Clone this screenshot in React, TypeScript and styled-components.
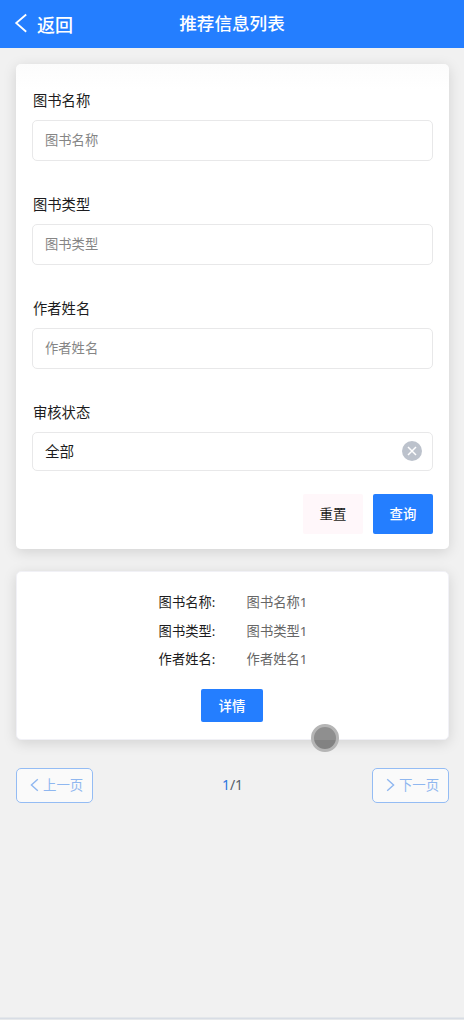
import React from "react";
import styled, { createGlobalStyle } from "styled-components";

const Global = createGlobalStyle`
  * { box-sizing: border-box; }
  body {
    margin: 0;
    background: #f1f1f1;
    color: #1c1c20;
    font-family: "Noto Sans", "Noto Sans CJK SC", sans-serif;
  }
  button, input { font-family: inherit; }
`;

const Page = styled.div`
  height: 1020px;
  display: flex;
  flex-direction: column;
  overflow: hidden;
`;

const Header = styled.header`
  height: 48px;
  flex: none;
  display: grid;
  grid-template-columns: 1fr auto 1fr;
  align-items: center;
  padding: 0 14px;
  background: #247eff;
  color: #fff;
`;

const Back = styled.a`
  display: flex;
  align-items: center;
  gap: 9px;
  font-size: 18px;
  font-weight: 500;
  line-height: 24px;
  svg { display: block; margin-top: -2px; }
  span { margin-top: 1px; }
`;

const Title = styled.h1`
  margin: 0;
  font-size: 17.6px;
  font-weight: 500;
  line-height: 24px;
  padding-bottom: 2px;
`;

const Content = styled.main`
  flex: 1;
  padding: 16px 15px 0 16px;
`;

const Card = styled.section`
  background: #fff;
  border-radius: 5px;
  box-shadow: 0 3px 14px rgba(0, 0, 0, 0.13);
`;

const SearchCard = styled(Card)`
  height: 485px;
  padding: 26px 16px 0;
  background: linear-gradient(#fcfcfc, #fff 26px);
`;

const Field = styled.div<{ $last?: boolean }>`
  height: ${(p) => (p.$last ? 92 : 104)}px;
`;

const Label = styled.label`
  display: block;
  height: 30px;
  font-size: 14.3px;
  line-height: 20px;
  padding: 1px 0 0 1px;
`;

const Control = styled.div<{ $height?: number }>`
  display: flex;
  align-items: center;
  justify-content: space-between;
  height: ${(p) => p.$height ?? 41}px;
  padding: 0 10px 2px 12px;
  border: 1px solid #e8e8e9;
  border-radius: 5px;
  background: #fff;
  font-size: 14.6px;
  line-height: 20px;
`;

const Input = styled.input`
  width: 100%;
  padding: 0;
  border: 0;
  outline: 0;
  background: transparent;
  font-size: 13.3px;
  line-height: 20px;
  &::placeholder { color: #858585; opacity: 1; }
`;

const Actions = styled.div`
  display: flex;
  justify-content: flex-end;
  gap: 10px;
`;

const Button = styled.button<{ $plain?: boolean }>`
  width: 60px;
  height: 40px;
  padding: 0 0 2px;
  border: 0;
  border-radius: 2px;
  background: ${(p) => (p.$plain ? "#fff7fa" : "#247eff")};
  color: ${(p) => (p.$plain ? "#1c1c20" : "#fff")};
  font-size: 13.4px;
  font-weight: ${(p) => (p.$plain ? 400 : 500)};
`;

const DetailButton = styled(Button)`
  width: 62px;
  height: 33px;
  margin-top: 16px;
  margin-right: 1px;
`;

const ResultCard = styled(Card)`
  height: 169px;
  margin-top: 22px;
  padding-top: 16px;
  display: flex;
  flex-direction: column;
  align-items: center;
  border: 1px solid #f1f1f6;
`;

const Rows = styled.dl`
  margin: 0;
  display: grid;
  grid-template-columns: 88px auto;
  grid-auto-rows: 28.4px;
  align-items: center;
  font-size: 13.3px;
  line-height: 20px;
  padding-left: 1px;
  dt, dd { margin: 0; }
  dd { color: #666; }
`;

const Pager = styled.nav`
  display: flex;
  justify-content: space-between;
  align-items: center;
  margin-top: 28px;
  font-size: 14px;
`;

const PageButton = styled.button`
  width: 77px;
  height: 35px;
  display: flex;
  align-items: center;
  gap: 4px;
  padding: 0 0 3px 13px;
  border: 1px solid #94bcf4;
  border-radius: 5px;
  background: #fafafa;
  color: #8fb7f0;
  font-size: 13.4px;
  white-space: nowrap;
  svg { position: relative; top: 1px; }
`;

const Count = styled.span`
  color: #555d69;
  padding-bottom: 2px;
  b { color: #2d76df; font-weight: 400; }
`;

const TouchPoint = styled.div`
  position: absolute;
  left: 311px;
  top: 724px;
  width: 28px;
  height: 28px;
  border: 3px solid #b5b5b5;
  border-radius: 50%;
  background: linear-gradient(#8f8f8f 16px, #828282 16px);
  background-origin: border-box;
`;

const BottomEdge = styled.footer`
  height: 3px;
  flex: none;
  border-top: 1px solid #e4e7ea;
  border-bottom: 1px solid #e7e9eb;
  background: #d8dde5;
`;

const Chevron = ({ right = false }: { right?: boolean }) => (
  <svg width="9" height="14" viewBox="0 0 9 14" fill="none" stroke="currentColor" strokeWidth="1.4">
    <path d={right ? "M1.2 1.2 7.6 7l-6.4 5.8" : "M7.8 1.2 1.4 7l6.4 5.8"} />
  </svg>
);

const names = ["图书名称", "图书类型", "作者姓名"];

export default function App() {
  return (
    <Page>
      <Global />
      <Header>
        <Back>
          <svg width="14" height="20" viewBox="0 0 14 20" fill="none" stroke="currentColor" strokeWidth="1.8">
            <path d="M12.2 1.5 2.2 10l10 8.7" />
          </svg>
          <span>返回</span>
        </Back>
        <Title>推荐信息列表</Title>
      </Header>
      <Content>
        <SearchCard>
          {names.map((name) => (
            <Field key={name}>
              <Label>{name}</Label>
              <Control>
                <Input placeholder={name} />
              </Control>
            </Field>
          ))}
          <Field $last>
            <Label>审核状态</Label>
            <Control $height={39}>
              <span>全部</span>
              <svg width="20" height="20" viewBox="0 0 20 20">
                <circle cx="10" cy="10" r="10" fill="#bcc2cc" />
                <path d="m6 6 8 8m0-8-8 8" stroke="#fff" strokeWidth="1.5" />
              </svg>
            </Control>
          </Field>
          <Actions>
            <Button $plain>重置</Button>
            <Button>查询</Button>
          </Actions>
        </SearchCard>
        <ResultCard>
          <Rows>
            {names.map((name) => (
              <React.Fragment key={name}>
                <dt>{name}:</dt>
                <dd>{name}1</dd>
              </React.Fragment>
            ))}
          </Rows>
          <DetailButton>详情</DetailButton>
        </ResultCard>
        <Pager>
          <PageButton><Chevron />上一页</PageButton>
          <Count><b>1</b>/1</Count>
          <PageButton><Chevron right />下一页</PageButton>
        </Pager>
      </Content>
      <BottomEdge />
      <TouchPoint />
    </Page>
  );
}
